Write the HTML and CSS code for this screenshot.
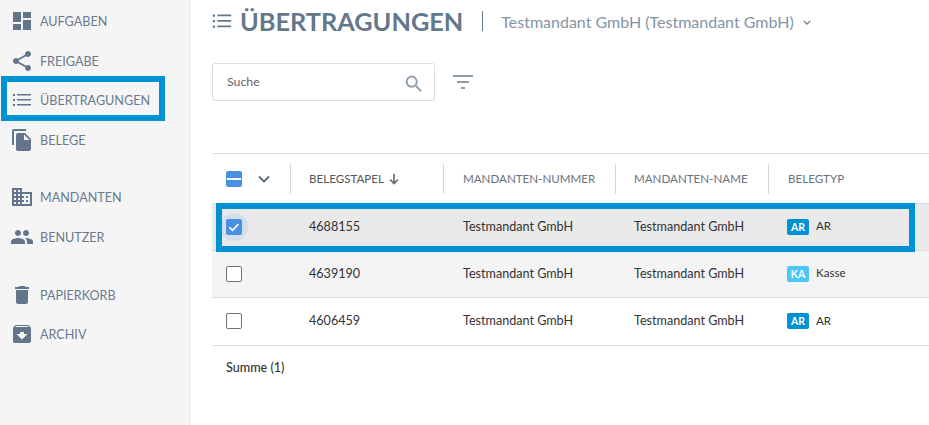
FILE: index.html
```html
<!DOCTYPE html>
<html lang="de">
<head>
<meta charset="utf-8">
<title>Übertragungen</title>
<link rel="stylesheet" href="styles.css">
</head>
<body>
<div class="page">
  <aside class="sidebar">
    <nav class="nav-group">
      <a class="nav-item"><svg class="nav-icon" viewBox="0 0 24 24"><path d="M3 13h8V3H3v10zm0 8h8v-6H3v6zm10 0h8V11h-8v10zm0-18v6h8V3h-8z"/></svg>AUFGABEN</a>
      <a class="nav-item"><svg class="nav-icon" viewBox="0 0 24 24"><path d="M18 16.08c-.76 0-1.44.3-1.96.77L8.91 12.7c.05-.23.09-.46.09-.7s-.04-.47-.09-.7l7.05-4.11c.54.5 1.25.81 2.04.81 1.66 0 3-1.34 3-3s-1.34-3-3-3-3 1.34-3 3c0 .24.04.47.09.7L8.04 9.81C7.5 9.31 6.79 9 6 9c-1.66 0-3 1.34-3 3s1.34 3 3 3c.79 0 1.5-.31 2.04-.81l7.12 4.16c-.05.21-.08.43-.08.65 0 1.61 1.31 2.92 2.92 2.92s2.92-1.31 2.92-2.92-1.31-2.92-2.92-2.92z"/></svg>FREIGABE</a>
      <a class="nav-item"><svg class="nav-icon" viewBox="0 0 24 24"><path d="M3 6h2v2H3zM3 11h2v2H3zM3 16h2v2H3zM7 6h14v1.6H7zM7 11h14v1.6H7zM7 16h14v1.6H7z"/></svg>ÜBERTRAGUNGEN</a>
      <a class="nav-item"><svg class="nav-icon" viewBox="0 0 24 24"><path d="M16 1H4c-1.1 0-2 .9-2 2v14h2V3h12V1zm-1 4l6 6v10c0 1.1-.9 2-2 2H7.99C6.89 23 6 22.1 6 21l.01-14c0-1.1.89-2 1.99-2h7zm-1 7h5.5L14 6.5V12z"/></svg>BELEGE</a>
    </nav>
    <nav class="nav-group nav-group-mid">
      <a class="nav-item"><svg class="nav-icon" viewBox="0 0 24 24"><path d="M12 7V3H2v18h20V7H12zM6 19H4v-2h2v2zm0-4H4v-2h2v2zm0-4H4V9h2v2zm0-4H4V5h2v2zm4 12H8v-2h2v2zm0-4H8v-2h2v2zm0-4H8V9h2v2zm0-4H8V5h2v2zm10 12h-8v-2h2v-2h-2v-2h2v-2h-2V9h8v10zm-2-8h-2v2h2v-2zm0 4h-2v2h2v-2z"/></svg>MANDANTEN</a>
      <a class="nav-item"><svg class="nav-icon" viewBox="0 0 24 24"><path d="M16 11c1.66 0 2.99-1.34 2.99-3S17.66 5 16 5c-1.66 0-3 1.34-3 3s1.34 3 3 3zm-8 0c1.66 0 2.99-1.34 2.99-3S9.66 5 8 5C6.34 5 5 6.34 5 8s1.34 3 3 3zm0 2c-2.33 0-7 1.17-7 3.5V19h14v-2.5c0-2.33-4.67-3.5-7-3.5zm8 0c-.29 0-.62.02-.97.05 1.16.84 1.97 1.97 1.97 3.45V19h6v-2.5c0-2.33-4.67-3.5-7-3.5z"/></svg>BENUTZER</a>
    </nav>
    <nav class="nav-group">
      <a class="nav-item"><svg class="nav-icon" viewBox="0 0 24 24"><path d="M6 19c0 1.1.9 2 2 2h8c1.1 0 2-.9 2-2V7H6v12zM19 4h-3.5l-1-1h-5l-1 1H5v2h14V4z"/></svg>PAPIERKORB</a>
      <a class="nav-item"><svg class="nav-icon" viewBox="0 0 24 24"><path d="M20.54 5.23l-1.39-1.68C18.88 3.21 18.47 3 18 3H6c-.47 0-.88.21-1.16.55L3.46 5.23C3.17 5.57 3 6.02 3 6.5V19c0 1.1.9 2 2 2h14c1.1 0 2-.9 2-2V6.5c0-.48-.17-.93-.46-1.27zM12 17.5L6.5 12H10v-2h4v2h3.5L12 17.5zM5.12 5l.81-1h12l.94 1H5.12z"/></svg>ARCHIV</a>
    </nav>
  </aside>

  <main class="main">
    <header class="head">
      <svg class="head-icon" viewBox="0 0 24 24"><path d="M2 5h2.4v2.4H2zM2 11h2.4v2.4H2zM2 17h2.4v2.4H2zM7 5h15v1.8H7zM7 11h15v1.8H7zM7 17h15v1.8H7z"/></svg>
      <h1 class="title">ÜBERTRAGUNGEN</h1>
      <span class="head-sep"></span>
      <span class="tenant">Testmandant GmbH (Testmandant GmbH)</span>
      <svg class="tenant-chevron" viewBox="0 0 10 6"><path d="M1 1l4 4 4-4"/></svg>
    </header>

    <div class="toolbar">
      <div class="search">
        <span class="search-label">Suche</span>
        <svg class="search-icon" viewBox="0 0 24 24"><path d="M15.5 14h-.79l-.28-.27C15.41 12.59 16 11.11 16 9.5 16 5.91 13.09 3 9.5 3S3 5.91 3 9.5 5.91 16 9.5 16c1.61 0 3.09-.59 4.23-1.57l.27.28v.79l5 4.99L20.49 19l-4.99-5zm-6 0C7.01 14 5 11.99 5 9.5S7.01 5 9.5 5 14 7.01 14 9.5 11.99 14 9.5 14z"/></svg>
      </div>
      <svg class="filter-icon" viewBox="0 0 20 14"><path d="M0 0h20v2H0zM4 6h12v2H4zM8 12h4v2H8z"/></svg>
    </div>

    <section class="table">
      <div class="thead row-grid">
        <div class="th th-select">
          <span class="checkbox checkbox-on"><span class="minus"></span></span>
          <svg class="th-chevron" viewBox="0 0 12 8"><path d="M1 1.5l5 5 5-5"/></svg>
        </div>
        <div class="th th-label th-dark">BELEGSTAPEL <svg class="sort-icon" viewBox="0 0 12 12"><path d="M6 1v9M2 6.5L6 10.5l4-4"/></svg></div>
        <div class="th th-label th-wide">MANDANTEN-NUMMER</div>
        <div class="th th-label">MANDANTEN-NAME</div>
        <div class="th th-label th-wide">BELEGTYP</div>
      </div>

      <div class="tr row-grid tr-selected">
        <div class="td td-select">
          <span class="halo"></span>
          <span class="checkbox checkbox-on"><svg class="check" viewBox="0 0 16 16"><path d="M3.5 8.3l3 3 6-6.3"/></svg></span>
        </div>
        <div class="td">4688155</div>
        <div class="td td-wide">Testmandant GmbH</div>
        <div class="td">Testmandant GmbH</div>
        <div class="td td-type"><span class="badge badge-ar">AR</span><span class="type-label">AR</span></div>
      </div>

      <div class="tr row-grid tr-hover">
        <div class="td td-select"><span class="checkbox"></span></div>
        <div class="td">4639190</div>
        <div class="td td-wide">Testmandant GmbH</div>
        <div class="td">Testmandant GmbH</div>
        <div class="td td-type"><span class="badge badge-ka">KA</span><span class="type-label">Kasse</span></div>
      </div>

      <div class="tr row-grid">
        <div class="td td-select"><span class="checkbox"></span></div>
        <div class="td">4606459</div>
        <div class="td td-wide">Testmandant GmbH</div>
        <div class="td">Testmandant GmbH</div>
        <div class="td td-type"><span class="badge badge-ar">AR</span><span class="type-label">AR</span></div>
      </div>

      <div class="sum">Summe (1)</div>
    </section>
  </main>

  <div class="mark mark-nav"></div>
  <div class="mark mark-row"></div>
</div>
</body>
</html>
```
FILE: styles.css
```css
* { box-sizing: border-box; }
html, body { margin: 0; padding: 0; background: #fff; }
body { font-family: Lato, "Open Sans", sans-serif; color: #333; }
.page { position: relative; display: flex; width: 929px; height: 425px; overflow: hidden; }

.sidebar { flex: 0 0 190px; background: #f5f5f5; border-right: 1px solid #e4e4e4; padding-top: 1.3px; }
.nav-group { margin-bottom: 17.7px; }
.nav-group-mid { margin-bottom: 18.2px; }
.nav-item { display: flex; align-items: center; gap: 6px; height: 39.6px; padding-left: 10px; padding-top: 1px; font-size: 12.6px; color: #6a7a8d; }
.nav-icon { width: 24px; height: 24px; fill: #64748a; flex: none; margin-top: -1px; }

.main { flex: 1; min-width: 0; padding-left: 22px; }
.head { display: flex; align-items: center; height: 42px; }
.head-icon { width: 22px; height: 22px; fill: #64788c; margin-left: -1px; margin-right: 7px; }
.title { margin: 0; font-size: 25.3px; font-weight: 700; color: #64788c; }
.head-sep { width: 1px; height: 20px; background: #64788c; margin-left: 19px; margin-right: 18px; }
.tenant { font-size: 16px; color: #8494a5; }
.tenant-chevron { width: 8px; height: 5px; margin-left: 9px; margin-top: 2px; fill: none; stroke: #64788c; stroke-width: 1.6; }

.toolbar { display: flex; align-items: center; margin-top: 21px; }
.search { display: flex; align-items: center; justify-content: space-between; width: 223px; height: 38px; border: 1px solid #ddd; border-radius: 3px; padding: 0 9px 0 14px; }
.search-label { font-size: 12.3px; color: #666; margin-top: -1px; }
.search-icon { width: 22px; height: 22px; fill: #8f9cab; margin-top: 4px; }
.filter-icon { width: 20px; height: 14px; margin-left: 18px; fill: #8f9cab; }

.table { margin-top: 52px; }
.row-grid { display: grid; grid-template-columns: 78px 153px 172px 153px 1fr; }
.thead { height: 50px; border-top: 1px solid #ddd; align-items: center; }
.th { height: 30px; display: flex; align-items: center; }
.th-select { padding-left: 14px; }
.th-label { border-left: 1px solid #d5d5d5; padding-left: 18px; font-size: 11.6px; color: #68727e; }
.th-wide { padding-left: 19px; }
.th-dark { color: #555; gap: 4px; }
.th-chevron { width: 12px; height: 8px; margin-left: 16px; fill: none; stroke: #5f6b78; stroke-width: 1.8; }
.sort-icon { width: 12px; height: 12px; fill: none; stroke: #666; stroke-width: 1.6; }

.checkbox { position: relative; display: flex; align-items: center; justify-content: center; width: 16px; height: 16px; border: 1px solid #757575; border-radius: 2px; background: #fff; flex: none; }
.checkbox-on { background: #4a90e2; border-color: #4a90e2; }
.minus { width: 14px; height: 2px; background: #fff; }
.check { width: 16px; height: 16px; fill: none; stroke: #fff; stroke-width: 1.6; flex: none; }

.tr { height: 47.5px; border-bottom: 1px solid #ddd; align-items: center; }
.tr-selected { border-top: 1px solid #ddd; background: #e9e9e9; }
.tr-hover { background: #f4f4f4; }
.td { padding-left: 19px; padding-bottom: 1px; font-size: 12.6px; color: #333; }
.td-wide { padding-left: 20px; }
.td-select { position: relative; display: flex; align-items: center; height: 100%; padding-left: 14px; padding-bottom: 0; }
.halo { position: absolute; left: 8px; top: 50%; width: 28px; height: 28px; margin-top: -14px; border-radius: 50%; background: #d3dfed; }
.td-type { display: flex; align-items: center; gap: 7px; padding-left: 19px; padding-bottom: 0; font-size: 11.6px; }
.type-label { margin-top: -2px; }
.badge { display: flex; align-items: center; justify-content: center; width: 22px; height: 16px; border-radius: 2px; font-size: 10.5px; font-weight: 700; color: #fff; }
.badge-ar { background: #0090d4; }
.badge-ka { background: #4bc6f7; }

.sum { padding: 14px 0 0 14px; font-size: 12.6px; font-weight: 500; color: #333; }

.mark { position: absolute; border: 6px solid #0090d4; pointer-events: none; }
.mark-nav { left: 1px; top: 76px; width: 164px; height: 45px; }
.mark-row { left: 216px; top: 203px; width: 699px; height: 49px; }
```
